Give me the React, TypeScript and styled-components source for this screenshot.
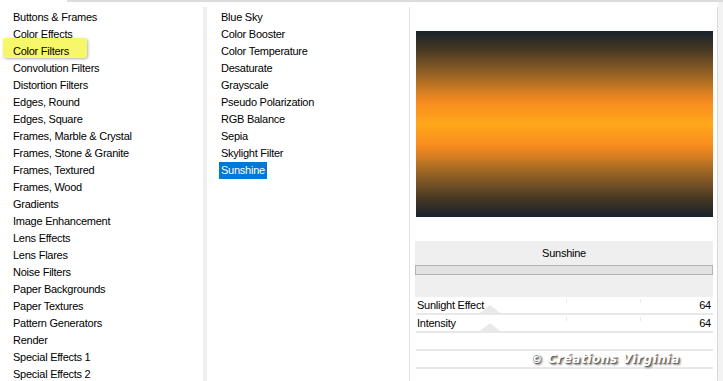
import React from 'react'
import styled, { createGlobalStyle } from 'styled-components'

const GlobalStyle = createGlobalStyle`
  html, body {
    margin: 0;
    padding: 0;
    background: #ffffff;
  }
  body {
    font-family: "Liberation Sans", Arial, sans-serif;
    font-size: 11px;
    color: #000;
  }
`

const Page = styled.div`
  width: 723px;
  height: 381px;
  overflow: hidden;
  display: flex;
  flex-direction: column;
  background: #fff;
`

const TopEdge = styled.div`
  height: 2px;
  margin-left: 67px;
  background: #dcdcdc;
  flex: none;
`

const Columns = styled.div`
  display: flex;
  flex: 1;
  min-height: 0;
`

const CategoryList = styled.div`
  width: 203px;
  box-sizing: border-box;
  padding: 7px 0 0 13px;
  flex: none;
`

const ListItem = styled.div`
  position: relative;
  height: 17px;
  line-height: 17px;
  letter-spacing: -0.25px;
  white-space: nowrap;
`

const Highlight = styled.span`
  position: absolute;
  left: -10px;
  top: -5px;
  width: 84px;
  height: 20px;
  border-radius: 3px;
  background: #f7f76a;
  box-shadow: 1px 1px 3px rgba(0, 0, 0, 0.3);
  z-index: 0;
`

const ItemText = styled.span`
  position: relative;
  z-index: 1;
`

const Splitter = styled.div`
  width: 4px;
  margin-top: 5px;
  background: #efefef;
  flex: none;
`

const FilterList = styled.div`
  width: 202px;
  box-sizing: border-box;
  padding: 7px 0 0 12px;
  flex: none;
`

const FilterItem = styled.div<{ $selected?: boolean }>`
  width: fit-content;
  height: 17px;
  line-height: 17px;
  padding: 0 2px;
  letter-spacing: -0.25px;
  white-space: nowrap;
  background: ${p => (p.$selected ? '#0078d7' : 'transparent')};
  color: ${p => (p.$selected ? '#ffffff' : '#000000')};
`

const SettingsPanel = styled.div`
  width: 309px;
  box-sizing: border-box;
  margin-top: 5px;
  padding: 24px 4px 0 6px;
  border-left: 1px solid #e2e2e2;
  border-right: 1px solid #d8d8d8;
  flex: none;
  display: flex;
  flex-direction: column;
`

const Preview = styled.div`
  height: 186px;
  background: linear-gradient(
    to bottom,
    #17232b 0%,
    #3c3324 8%,
    #6a4b25 16%,
    #9a6424 24%,
    #d17c22 32%,
    #f98e1f 39%,
    #ffa71a 50%,
    #f98e1f 61%,
    #d17c22 68%,
    #9a6424 76%,
    #6a4b25 84%,
    #3c3324 92%,
    #17232b 100%
  );
`

const SettingsHead = styled.div`
  margin: 24px 0 0 -1px;
  height: 56px;
  box-sizing: border-box;
  padding-top: 4px;
  background: #efefef;
`

const HeadTitle = styled.div`
  height: 17px;
  line-height: 17px;
  text-align: center;
  letter-spacing: -0.25px;
`

const ProgressBar = styled.div`
  margin-top: 3px;
  height: 10px;
  box-sizing: border-box;
  border: 1px solid #b4b4b4;
  background: #e2e2e2;
`

const ParamRow = styled.div`
  position: relative;
  display: flex;
  justify-content: space-between;
  align-items: center;
  height: 16px;
  line-height: 16px;
  padding: 0 2px 0 1px;
  border-bottom: 2px solid #e8e8e8;
  letter-spacing: -0.25px;
`

const Thumb = styled.span`
  position: absolute;
  left: 64px;
  bottom: 0;
  width: 0;
  height: 0;
  border-left: 10px solid transparent;
  border-right: 10px solid transparent;
  border-bottom: 8px solid #e9e9e9;
`

const Tick = styled.span<{ $x: number }>`
  position: absolute;
  top: 2px;
  left: ${p => p.$x}px;
  width: 1px;
  height: 4px;
  background: #ebebeb;
`

const Label = styled.span`
  position: relative;
  z-index: 1;
`

const Watermark = styled.span`
  margin: 0 31px 0 auto;
  font-family: "DejaVu Sans", sans-serif;
  font-weight: bold;
  font-style: italic;
  font-size: 12px;
  letter-spacing: 0.6px;
  color: #ffffff;
  text-shadow: 1px 1px 1px #555555, 2px 2px 2px #8a8a8a;
`

const EdgeStrip = styled.div`
  flex: 1;
  background: #f3f3f3;
`

const categories = [
  'Buttons & Frames',
  'Color Effects',
  'Color Filters',
  'Convolution Filters',
  'Distortion Filters',
  'Edges, Round',
  'Edges, Square',
  'Frames, Marble & Crystal',
  'Frames, Stone & Granite',
  'Frames, Textured',
  'Frames, Wood',
  'Gradients',
  'Image Enhancement',
  'Lens Effects',
  'Lens Flares',
  'Noise Filters',
  'Paper Backgrounds',
  'Paper Textures',
  'Pattern Generators',
  'Render',
  'Special Effects 1',
  'Special Effects 2',
]

const filters = [
  'Blue Sky',
  'Color Booster',
  'Color Temperature',
  'Desaturate',
  'Grayscale',
  'Pseudo Polarization',
  'RGB Balance',
  'Sepia',
  'Skylight Filter',
  'Sunshine',
]

const params = [
  { name: 'Sunlight Effect', value: 64 },
  { name: 'Intensity', value: 64 },
]

export default function App() {
  return (
    <>
      <GlobalStyle />
      <Page>
        <TopEdge />
        <Columns>
          <CategoryList>
            {categories.map(c => (
              <ListItem key={c}>
                {c === 'Color Filters' && <Highlight />}
                <ItemText>{c}</ItemText>
              </ListItem>
            ))}
          </CategoryList>
          <Splitter />
          <FilterList>
            {filters.map(f => (
              <FilterItem key={f} $selected={f === 'Sunshine'}>
                {f}
              </FilterItem>
            ))}
          </FilterList>
          <SettingsPanel>
            <Preview />
            <SettingsHead>
              <HeadTitle>Sunshine</HeadTitle>
              <ProgressBar />
            </SettingsHead>
            {params.map(p => (
              <ParamRow key={p.name}>
                <Thumb />
                <Tick $x={150} />
                <Tick $x={224} />
                <Label>{p.name}</Label>
                <Label>{p.value}</Label>
              </ParamRow>
            ))}
            <ParamRow />
            <ParamRow>
              <Watermark>© Créations Virginia</Watermark>
            </ParamRow>
          </SettingsPanel>
          <EdgeStrip />
        </Columns>
      </Page>
    </>
  )
}
